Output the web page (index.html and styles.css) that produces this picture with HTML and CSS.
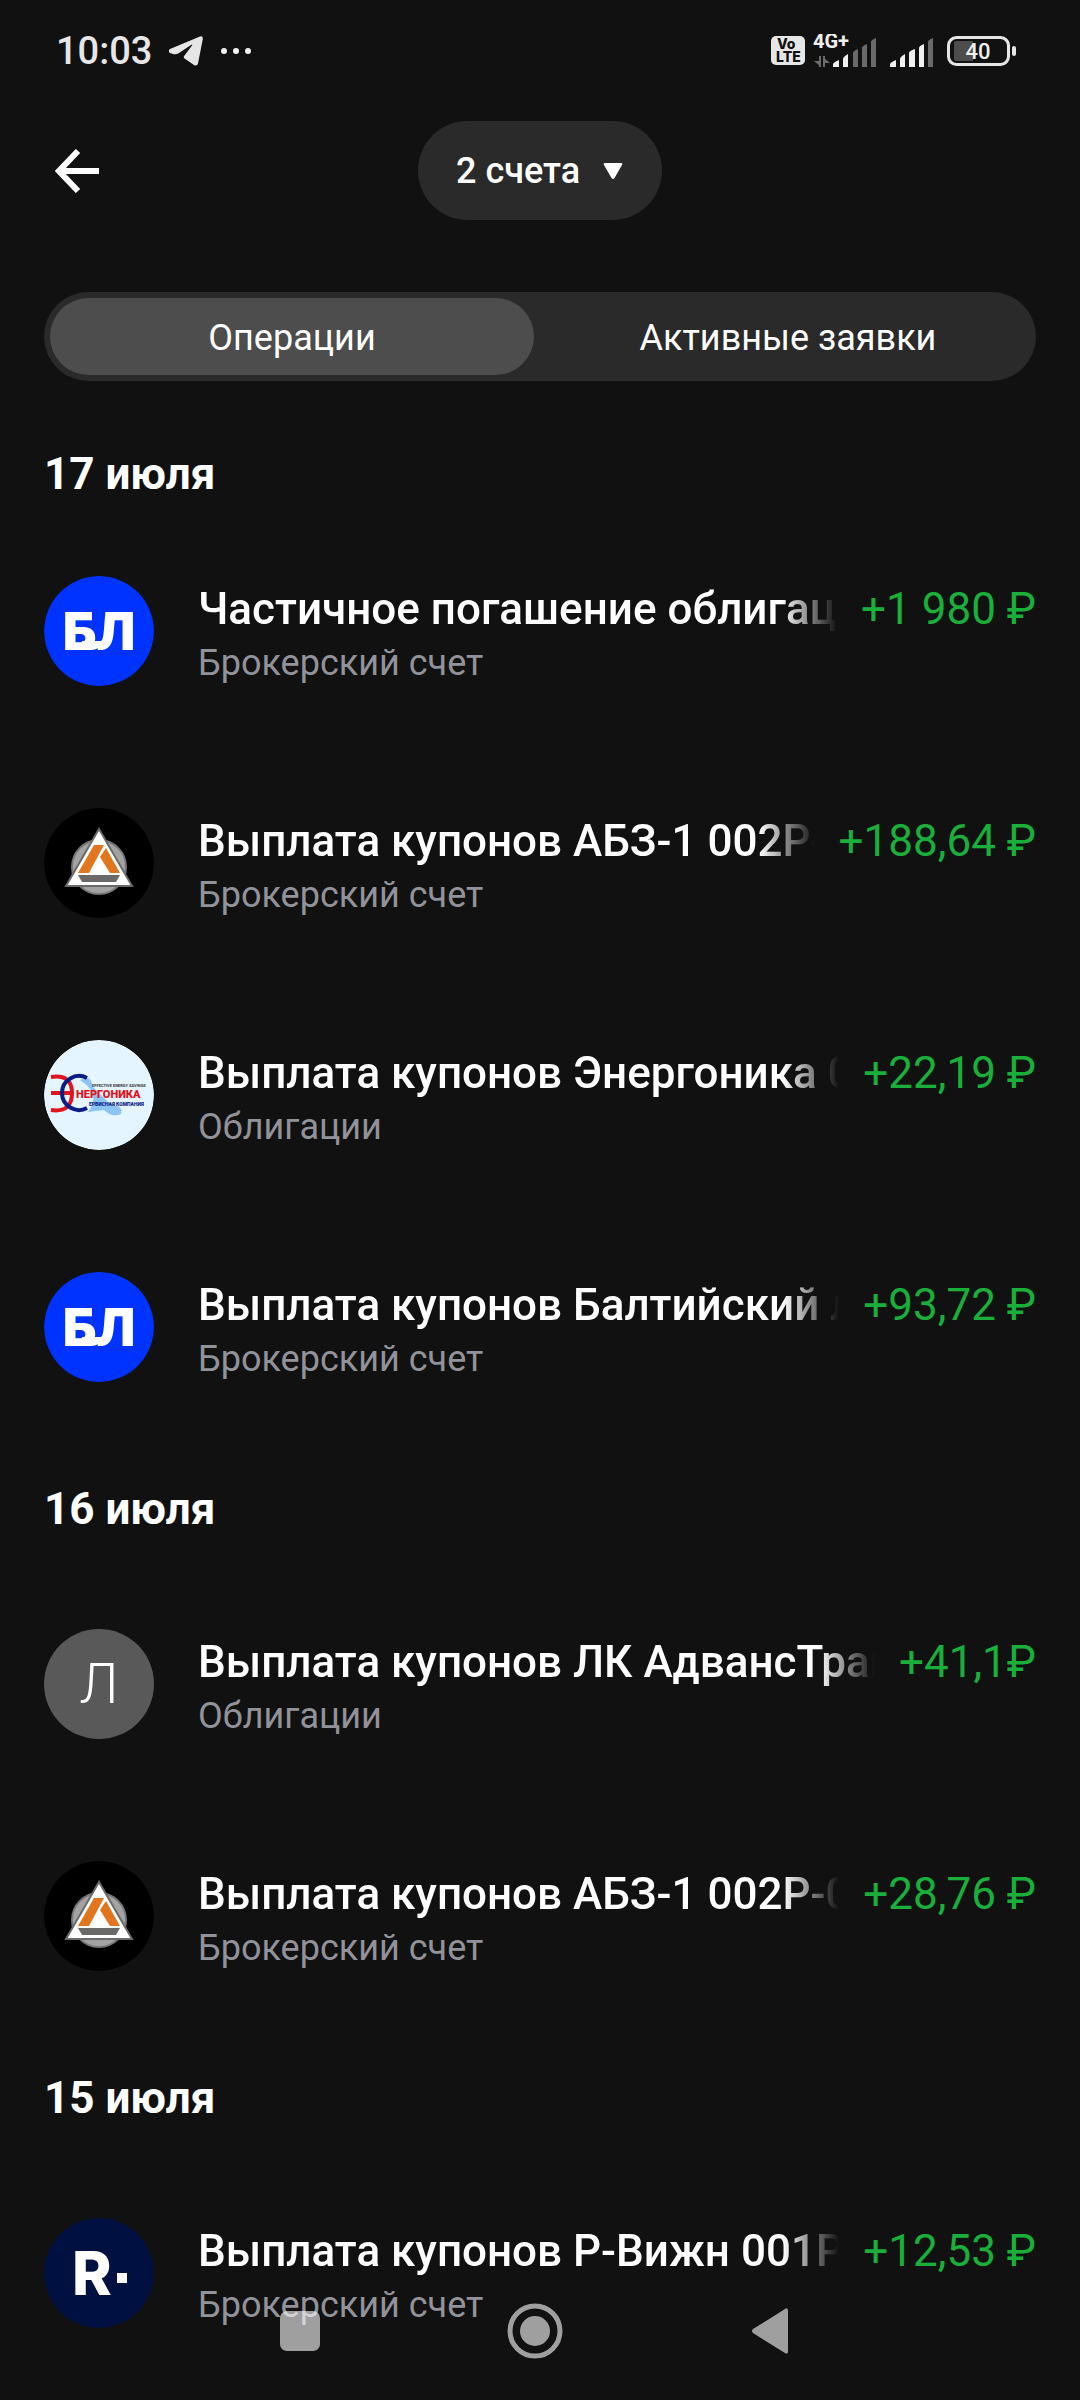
FILE: index.html
```html
<!DOCTYPE html>
<html lang="ru">
<head>
    <meta charset="UTF-8">
    <meta name="viewport" content="width=device-width, initial-scale=1.0">
    <title>Операции</title>
    <link rel="stylesheet" href="styles.css">
</head>
<body>
    <!-- Shared logos -->
    <svg class="sprite" aria-hidden="true">
        <symbol id="logo-bl" viewBox="0 0 110 110">
            <circle cx="55" cy="55" r="55" fill="#0033ff"/>
            <text class="logo-bl-text" x="55" y="74" text-anchor="middle">БЛ</text>
            <path d="M38 65 H58 Q56 74 47 74 H38 Z" fill="#fff"/>
        </symbol>
        <symbol id="logo-abz" viewBox="0 0 110 110">
            <circle cx="55" cy="55" r="55" fill="#000"/>
            <circle cx="55" cy="59" r="27" fill="#a3a3a3" stroke="#777" stroke-width="2"/>
            <path d="M55 21 L88 78 H22 Z" fill="#fff" stroke="#6b6b6b" stroke-width="2"/>
            <path d="M50 37 H60 L45 65 H34 Z" fill="#e2761f"/>
            <path d="M62 40 L76 65 H66 L56 49 Z" fill="#e2761f"/>
            <path d="M34 67 H76 L72 74 H38 Z" fill="#6a6b68"/>
        </symbol>
    </svg>

    <header>
        <div class="status-bar">
            <div class="status-left">
                <span>10:03</span>
                <svg width="34" height="30" viewBox="0 0 34 30" fill="#e6e6e6">
                    <path d="M1 13 L31 0.5 Q34 -0.3 33.8 3 L29 27.500 Q28 30.500 25 29 L15.500 22.500 Q14 21 15.500 19.500 L23 9.500 Q24 8 22 9 L10 17 Q7 19 4 18 L1 17 Q-1.500 15 1 13 Z"/>
                </svg>
                <svg width="32" height="8" viewBox="0 0 32 8" fill="#f2f2f2">
                    <circle cx="4" cy="4" r="3"/>
                    <circle cx="16" cy="4" r="3"/>
                    <circle cx="28" cy="4" r="3"/>
                </svg>
            </div>
            <div class="status-right">
                <div class="network">
                    <svg width="34" height="30" viewBox="0 0 34 30">
                        <rect width="34" height="29" rx="5" fill="#e6e6e6"/>
                        <text class="volte-text" x="6" y="13">Vo</text>
                        <text class="volte-text" x="5" y="26">LTE</text>
                    </svg>
                    <svg width="65" height="34" viewBox="0 0 65 34">
                        <text class="net-text" x="0" y="14">4G+</text>
                        <g fill="#6a6a6a">
                            <path d="M6 33 V22 H8 V33 Z M1 27 H8 V33 Z M10 22 H12 V33 H10 Z M10 23 L17 29 H10 Z"/>
                            <path d="M40 19 Q40 17 45 15 V33 H40 Z"/>
                            <path d="M49 14 Q49 12 54 10 V33 H49 Z"/>
                            <path d="M58 8 Q58 6 63 4 V33 H58 Z"/>
                        </g>
                        <g fill="#f0f0f0">
                            <path d="M20 33 V30 Q21 28 26 26 V33 Z"/>
                            <path d="M30 33 V25 Q30 23 35 20 V33 Z"/>
                        </g>
                    </svg>
                </div>
                <svg width="45" height="34" viewBox="0 0 45 34">
                    <g fill="#f0f0f0">
                        <path d="M0 33 V30 Q1 28 6 26 V33 Z"/>
                        <path d="M10 33 V25 Q10 23 15 20 V33 Z"/>
                        <path d="M19 19 Q19 17 25 15 V33 H19 Z"/>
                        <path d="M29 14 Q29 12 34 10 V33 H29 Z"/>
                    </g>
                    <path d="M38 8 Q38 6 43 4 V33 H38 Z" fill="#6a6a6a"/>
                </svg>
                <svg width="70" height="30" viewBox="0 0 70 30">
                    <rect x="1.500" y="1.500" width="60" height="27" rx="8" fill="none" stroke="#e6e6e6" stroke-width="3"/>
                    <path d="M9 5 H26 V25 H9 Q7 25 7 23 V7 Q7 5 9 5 Z" fill="#4d4d4d"/>
                    <rect x="65" y="10" width="4" height="10" rx="2" fill="#e6e6e6"/>
                    <text class="battery-text" x="31" y="23" text-anchor="middle">40</text>
                </svg>
            </div>
        </div>

        <div class="top-bar">
            <button class="back-btn" aria-label="Назад">
                <svg width="44" height="44" viewBox="0 0 44 44" fill="none" stroke="#fff" stroke-width="6">
                    <path d="M23 2 L4 22 L23 42 M4 22 H44"/>
                </svg>
            </button>
            <div class="account-picker">
                <select class="account-select" aria-label="Счета">
                    <option>2 счета</option>
                </select>
                <svg width="20" height="16" viewBox="0 0 20 16" fill="#fff">
                    <path d="M2 0 H18 Q20 0 19 2 L11.500 15 Q10 17 8.500 15 L1 2 Q0 0 2 0 Z"/>
                </svg>
            </div>
        </div>

        <div class="tabs" role="tablist">
            <button class="tab tab-active" role="tab" aria-selected="true">Операции</button>
            <button class="tab" role="tab" aria-selected="false">Активные заявки</button>
        </div>
    </header>

    <main>
        <section>
            <h2 class="day day-first">17 июля</h2>
            <ul class="operations">
                <li class="operation">
                    <svg class="avatar"><use href="#logo-bl"/></svg>
                    <div class="info">
                        <div class="line">
                            <span class="name">Частичное погашение облигаций</span>
                            <span class="amount">+1 980 ₽</span>
                        </div>
                        <div class="account">Брокерский счет</div>
                    </div>
                </li>
                <li class="operation">
                    <svg class="avatar"><use href="#logo-abz"/></svg>
                    <div class="info">
                        <div class="line">
                            <span class="name">Выплата купонов АБЗ-1 002Р-01</span>
                            <span class="amount">+188,64 ₽</span>
                        </div>
                        <div class="account">Брокерский счет</div>
                    </div>
                </li>
                <li class="operation">
                    <svg class="avatar" viewBox="0 0 110 110">
                        <circle cx="55" cy="55" r="55" fill="#e4f5ff"/>
                        <path d="M36 40 Q48 34 48 46 L66 64 Q80 66 77 74 Q68 78 60 70 L44 72 Q58 54 36 40 Z" fill="#8cc4f2"/>
                        <g fill="none" stroke-width="4">
                            <path d="M7 37 Q28 34 28 53 Q28 73 7 70 M7 53 H28" stroke="#e0141c"/>
                            <path d="M43 38 A17 17 0 1 0 43 68" stroke="#0a1c86"/>
                        </g>
                        <text class="energo-tag" x="48" y="47">EFFECTIVE ENERGY SAVINGS</text>
                        <text class="energo-name" x="32" y="58">НЕРГОНИКА</text>
                        <text class="energo-sub" x="45" y="66">ЕРВИСНАЯ КОМПАНИЯ</text>
                    </svg>
                    <div class="info">
                        <div class="line">
                            <span class="name">Выплата купонов Энергоника 001Р</span>
                            <span class="amount">+22,19 ₽</span>
                        </div>
                        <div class="account">Облигации</div>
                    </div>
                </li>
                <li class="operation">
                    <svg class="avatar"><use href="#logo-bl"/></svg>
                    <div class="info">
                        <div class="line">
                            <span class="name">Выплата купонов Балтийский лизинг</span>
                            <span class="amount">+93,72 ₽</span>
                        </div>
                        <div class="account">Брокерский счет</div>
                    </div>
                </li>
            </ul>
        </section>

        <section>
            <h2 class="day">16 июля</h2>
            <ul class="operations">
                <li class="operation">
                    <div class="avatar avatar-letter">Л</div>
                    <div class="info">
                        <div class="line">
                            <span class="name">Выплата купонов ЛК АдвансТрак</span>
                            <span class="amount">+41,1₽</span>
                        </div>
                        <div class="account">Облигации</div>
                    </div>
                </li>
                <li class="operation">
                    <svg class="avatar"><use href="#logo-abz"/></svg>
                    <div class="info">
                        <div class="line">
                            <span class="name">Выплата купонов АБЗ-1 002Р-01</span>
                            <span class="amount">+28,76 ₽</span>
                        </div>
                        <div class="account">Брокерский счет</div>
                    </div>
                </li>
            </ul>
        </section>

        <section>
            <h2 class="day">15 июля</h2>
            <ul class="operations">
                <li class="operation">
                    <svg class="avatar" viewBox="0 0 110 110">
                        <circle cx="55" cy="55" r="55" fill="#001040"/>
                        <text class="logo-r-text" x="28" y="77">R</text>
                        <rect x="73" y="55" width="10" height="10" fill="#fff"/>
                    </svg>
                    <div class="info">
                        <div class="line">
                            <span class="name">Выплата купонов Р-Вижн 001Р-02</span>
                            <span class="amount">+12,53 ₽</span>
                        </div>
                        <div class="account">Брокерский счет</div>
                    </div>
                </li>
            </ul>
        </section>
    </main>

    <nav class="system-nav">
        <button class="nav-btn" aria-label="Недавние">
            <svg width="40" height="40" viewBox="0 0 40 40"><rect width="40" height="40" rx="7"/></svg>
        </button>
        <button class="nav-btn" aria-label="Домой">
            <svg width="56" height="56" viewBox="0 0 56 56">
                <circle cx="28" cy="28" r="25" fill="none" stroke="#fff" stroke-width="5"/>
                <circle cx="28" cy="28" r="15"/>
            </svg>
        </button>
        <button class="nav-btn" aria-label="Назад">
            <svg width="38" height="46" viewBox="0 0 38 46"><path d="M34 1 Q37 -1 37 3 V43 Q37 47 34 45 L2 25 Q0 23 2 21 Z"/></svg>
        </button>
    </nav>
</body>
</html>
```
FILE: styles.css
```css
* {
    box-sizing: border-box;
}
body {
    margin: 0;
    min-height: 100vh;
    background-color: #111111;
    color: #ffffff;
    font-family: Roboto, "Noto Sans", sans-serif;
}
button {
    border: none;
    padding: 0;
    background: none;
    color: inherit;
    font-family: inherit;
    cursor: pointer;
}
svg {
    display: block;
}
.sprite {
    position: absolute;
    width: 0;
    height: 0;
}

/* Status bar */
.status-bar {
    display: flex;
    justify-content: space-between;
    align-items: center;
    height: 101px;
    padding: 0 63px 0 56px;
    color: #e6e6e6;
    font-size: 38px;
    font-weight: 500;
}
.status-left {
    display: flex;
    align-items: center;
    gap: 17px;
}
.status-right {
    display: flex;
    align-items: center;
    gap: 12px;
}
.network {
    display: flex;
    align-items: center;
    gap: 8px;
}
.volte-text {
    font-size: 14px;
    font-weight: 800;
    font-family: Inter, sans-serif;
    fill: #111111;
}
.net-text {
    font-size: 20px;
    font-weight: 700;
    fill: #f0f0f0;
}
.battery-text {
    font-size: 22px;
    font-weight: 500;
    fill: #f0f0f0;
}

/* Header */
.top-bar {
    display: grid;
    grid-template-columns: 1fr auto 1fr;
    align-items: center;
    padding: 20px 44px 0;
}
.back-btn {
    justify-self: start;
    padding: 11px;
}
.account-picker {
    display: flex;
    align-items: center;
    gap: 22px;
    height: 99px;
    padding: 0 39px 0 38px;
    border-radius: 50px;
    background-color: #2a2a2a;
}
.account-select {
    appearance: none;
    border: none;
    padding: 0;
    background: none;
    color: #ffffff;
    font-family: inherit;
    font-size: 36px;
    font-weight: 500;
}
.tabs {
    display: flex;
    gap: 12px;
    margin: 72px 44px 27px;
    padding: 6px;
    border-radius: 45px;
    background-color: #2a2a2a;
}
.tab {
    flex: 1;
    height: 77px;
    padding-top: 3px;
    border-radius: 39px;
    font-size: 36px;
}
.tab-active {
    background-color: #4d4d4d;
}

/* Operations */
.day {
    margin: 0;
    padding: 40px 44px 33px;
    font-size: 44px;
    font-weight: 700;
    line-height: 52px;
}
.day-first {
    padding-bottom: 15px;
}
.operations {
    margin: 0;
    padding: 0;
    list-style: none;
}
.operation {
    display: flex;
    gap: 44px;
    padding: 61px 44px 58px;
}
.avatar {
    flex: none;
    width: 110px;
    height: 110px;
    border-radius: 50%;
}
.avatar-letter {
    display: flex;
    align-items: center;
    justify-content: center;
    background-color: #595959;
    font-size: 55px;
    font-weight: 300;
}
.logo-bl-text {
    font-family: Inter, sans-serif;
    font-size: 52px;
    font-weight: 900;
    fill: #ffffff;
}
.logo-r-text {
    font-family: Inter, sans-serif;
    font-size: 60px;
    font-weight: 800;
    fill: #ffffff;
}
.energo-tag {
    font-size: 4px;
    font-weight: 700;
    fill: #333333;
}
.energo-name {
    font-size: 11px;
    font-weight: 900;
    fill: #e0141c;
}
.energo-sub {
    font-size: 5px;
    font-weight: 900;
    fill: #0a1c86;
}
.info {
    flex: 1;
    min-width: 0;
    padding-top: 5px;
}
.line {
    display: flex;
    gap: 24px;
    font-size: 44px;
    line-height: 56px;
    white-space: nowrap;
}
.name {
    flex: 1;
    min-width: 0;
    overflow: hidden;
    font-weight: 500;
    -webkit-mask-image: linear-gradient(to left, transparent, #000 56px);
    mask-image: linear-gradient(to left, transparent, #000 56px);
}
.amount {
    color: #1aae3a;
}
.account {
    color: #92929a;
    font-size: 36px;
    line-height: 52px;
}

/* Android navigation */
.system-nav {
    position: fixed;
    left: 0;
    right: 0;
    bottom: 0;
    display: flex;
    justify-content: center;
    gap: 135px;
    height: 138px;
    padding-right: 10px;
}
.nav-btn {
    display: flex;
    align-items: center;
    justify-content: center;
    width: 100px;
    fill: #ffffff;
    opacity: 0.6;
}
```
